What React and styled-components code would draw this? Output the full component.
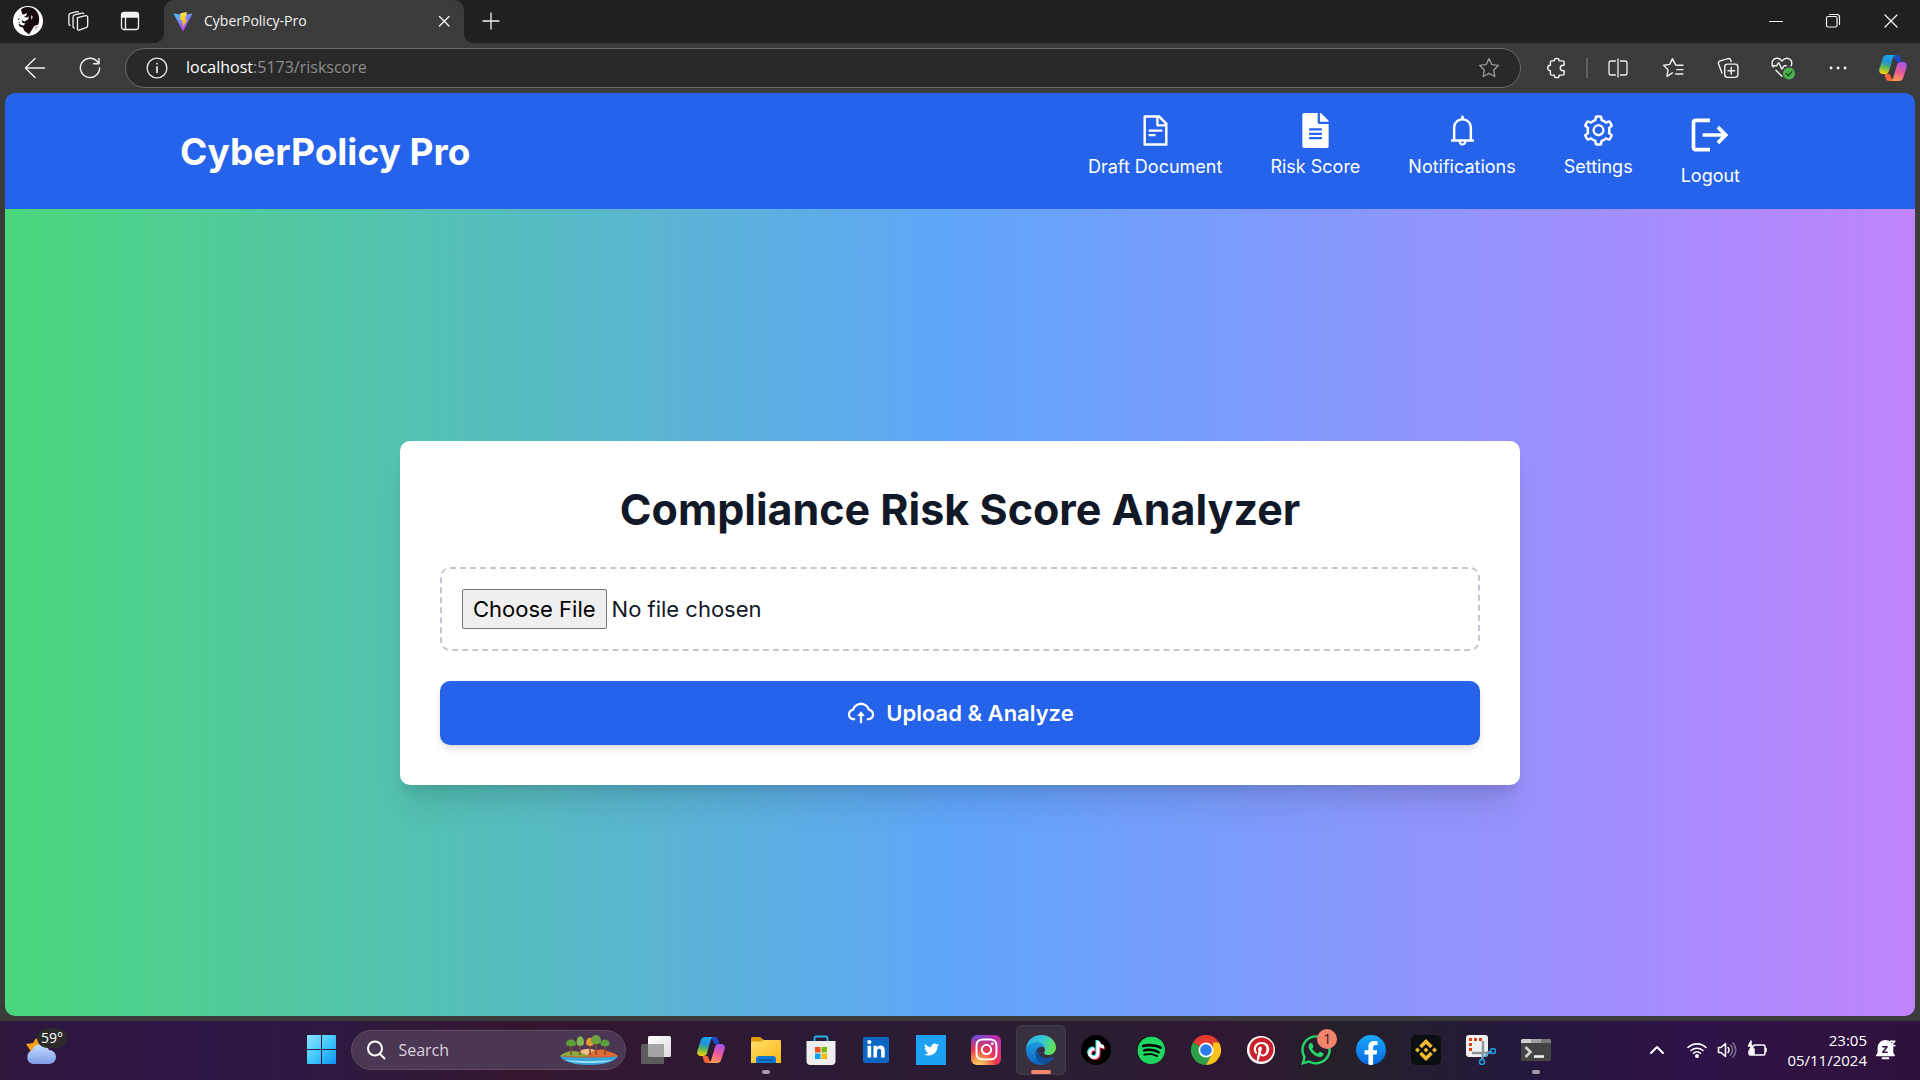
import React from "react";
import styled, { createGlobalStyle } from "styled-components";
import { AiOutlineFileText, AiOutlineBell, AiOutlineSetting, AiOutlineCloudUpload } from "react-icons/ai";
import { FaFileAlt, FaLinkedinIn, FaTwitter, FaInstagram, FaSpotify, FaPinterest, FaWhatsapp, FaFacebookF, FaTiktok } from "react-icons/fa";
import { SiBinance } from "react-icons/si";
import { MdLogout } from "react-icons/md";

const ui = '"Open Sans", "Noto Sans", sans-serif';
const inter = 'Inter, "Liberation Sans", sans-serif';

const GlobalStyle = createGlobalStyle`
  *, *::before, *::after { box-sizing: border-box; }
  body { margin: 0; background: #3b3b3b; font-family: ${ui}; }
  h1, h2, p { margin: 0; }
  button, input { font: inherit; }
  button { border: 0; padding: 0; background: none; color: inherit; cursor: pointer; }
  svg { display: block; flex: none; }
`;

const Desktop = styled.div`
  display: flex;
  flex-direction: column;
  height: 100vh;
  overflow: hidden;
`;

const TabStrip = styled.div`
  display: flex;
  align-items: flex-start;
  height: 43px;
  padding-left: 2px;
  background: #202020;
  color: #f2f2f2;
`;

const StripButton = styled.button`
  display: grid;
  place-items: center;
  width: ${(p) => p.$w || 52}px;
  height: 42px;
`;

const Tab = styled.div`
  display: flex;
  align-items: center;
  gap: 11px;
  width: 300px;
  height: 43px;
  margin-left: 6px;
  padding: 0 10px 2px 9px;
  border-radius: 10px 10px 0 0;
  background: #3b3b3b;
  font-size: 14px;
  position: relative;

  &::before, &::after {
    content: "";
    position: absolute;
    bottom: 0;
    width: 10px;
    height: 10px;
  }
  &::before { left: -10px; background: radial-gradient(circle at 0 0, transparent 10px, #3b3b3b 10px); }
  &::after { right: -10px; background: radial-gradient(circle at 100% 0, transparent 10px, #3b3b3b 10px); }
`;

const TabTitle = styled.span`
  flex: 1;
  white-space: nowrap;
`;

const WindowControls = styled.div`
  display: flex;
  margin-left: auto;
`;

const Toolbar = styled.div`
  display: flex;
  align-items: center;
  height: 50px;
  padding: 0 0 0 7px;
  background: #3b3b3b;
  color: #f0f0f0;
`;

const ToolButton = styled.button`
  display: grid;
  place-items: center;
  width: 55px;
  height: 40px;
`;

const AddressBar = styled.form`
  display: flex;
  flex: 1;
  align-items: center;
  height: 40px;
  margin: 0 8px;
  padding: 0 20px;
  border: 1px solid #6b6b6b;
  border-radius: 20px;
  background: #292929;
`;

const Url = styled.a`
  flex: 1;
  margin-left: 18px;
  padding-bottom: 2px;
  color: #8d8d8d;
  font-size: 16px;
  text-decoration: none;

  b { color: #fff; font-weight: 400; }
`;

const Divider = styled.span`
  width: 2px;
  height: 20px;
  margin: 0 2px;
  background: #606060;
`;

const Viewport = styled.div`
  display: flex;
  flex: 1;
  flex-direction: column;
  min-height: 0;
  margin: 0 5px 5px;
  border-radius: 10px;
  overflow: hidden;
  font-family: ${inter};
`;

const SiteHeader = styled.header`
  background: #2563eb;
  color: #fff;
`;

const HeaderInner = styled.div`
  display: flex;
  align-items: center;
  justify-content: space-between;
  max-width: 1600px;
  margin: 0 auto;
  padding: 20px;
`;

const Brand = styled.h1`
  font-size: 37px;
  font-weight: 700;
  line-height: 45px;
`;

const Nav = styled.nav`
  display: flex;
  align-items: flex-start;
  gap: 48px;
`;

const NavLink = styled.a`
  display: flex;
  flex-direction: column;
  align-items: center;
  gap: 5px;
  color: #fff;
  font-size: 18px;
  line-height: 27px;
  text-decoration: none;
`;

const Main = styled.main`
  display: flex;
  flex: 1;
  align-items: center;
  justify-content: center;
  background: linear-gradient(to right, #4bd77c, #60a5fa, #c084fc);
`;

const Card = styled.form`
  display: flex;
  flex-direction: column;
  gap: 30px;
  width: 100%;
  max-width: 1120px;
  padding: 40px;
  border-radius: 10px;
  background: #fff;
  box-shadow: 0 25px 31px -6px rgba(0, 0, 0, 0.1), 0 10px 12px -6px rgba(0, 0, 0, 0.1);
`;

const CardTitle = styled.h2`
  color: #111827;
  font-size: 43px;
  font-weight: 700;
  line-height: 56px;
  text-align: center;
`;

const FileInput = styled.input`
  display: block;
  width: 100%;
  padding: 20px;
  border: 2px dashed #c3c7cf;
  border-radius: 10px;
  color: #111827;
  font-size: 22px;
  line-height: 36px;

  &::file-selector-button {
    height: 40px;
    margin-right: 5px;
    padding: 0 10px;
    border: 1px solid #767676;
    border-radius: 2px;
    background: #efefef;
    color: #000;
    font: inherit;
  }
`;

const UploadButton = styled.button`
  display: flex;
  align-items: center;
  justify-content: center;
  gap: 10px;
  height: 64px;
  border-radius: 10px;
  background: #2563eb;
  color: #fff;
  font-size: 22px;
  font-weight: 600;
  box-shadow: 0 5px 8px -1px rgba(0, 0, 0, 0.1), 0 2px 5px -2px rgba(0, 0, 0, 0.1);
`;

const Taskbar = styled.footer`
  display: flex;
  align-items: center;
  height: 59px;
  gap: 5px;
  padding-bottom: 2px;
  background: linear-gradient(to right, #2d173b, #2e1647 9%, #2c1a40 17%, #35162f 27%, #2b1a35 42%, #291e31 58%, #301733 63%, #252029 70%, #25183f 80%, #2f1248 88%, #2f123b);
  color: #fff;
`;

const Weather = styled.button`
  display: flex;
  width: 66px;
  margin-right: auto;
  padding-left: 24px;
  position: relative;
`;

const Temperature = styled.span`
  position: absolute;
  left: 37px;
  top: -7px;
  padding: 0 4px;
  border-radius: 10px;
  background: #2b2b2b;
  font-size: 14px;
  line-height: 20px;
`;

const Apps = styled.div`
  display: flex;
  align-items: center;
  gap: 5px;
  margin-right: 66px;
`;

const SearchBox = styled.label`
  display: flex;
  align-items: center;
  gap: 12px;
  width: 275px;
  height: 40px;
  padding: 0 7px 0 14px;
  border: 1px solid #5f4a63;
  border-radius: 20px;
  background: #4b3753;
`;

const SearchInput = styled.input`
  flex: 1;
  min-width: 0;
  padding: 0;
  border: 0;
  outline: 0;
  background: none;
  color: #fff;
  font-size: 16px;

  &::placeholder { color: #d9d3dc; }
`;

const AppButton = styled.button`
  display: grid;
  place-items: center;
  width: 50px;
  height: 50px;
  border-radius: 6px;
  position: relative;
  background: ${(p) => (p.$active ? "#38303f" : "none")};
  box-shadow: ${(p) => (p.$active ? "inset 0 0 0 1px #453c4a" : "none")};

  &::after {
    content: "";
    display: ${(p) => (p.$active || p.$open ? "block" : "none")};
    position: absolute;
    bottom: 1px;
    width: ${(p) => (p.$active ? 20 : 8)}px;
    height: 4px;
    border-radius: 2px;
    background: ${(p) => (p.$active ? "#f4836c" : "#a396aa")};
  }
`;

const Tile = styled.span`
  display: grid;
  place-items: center;
  width: ${(p) => p.$size || 30}px;
  height: ${(p) => p.$size || 30}px;
  border-radius: ${(p) => p.$r || 0};
  background: ${(p) => p.$bg};
  color: ${(p) => p.$fg || "#fff"};
  overflow: hidden;
`;

const TikTokGlyph = styled(FaTiktok)`
  filter: drop-shadow(-1px -1px 0 #25f4ee) drop-shadow(1px 1px 0 #fe2c55);
`;

const FacebookGlyph = styled(FaFacebookF)`
  align-self: end;
`;

const Badge = styled.span`
  position: absolute;
  top: 4px;
  right: 4px;
  width: 20px;
  height: 20px;
  border-radius: 50%;
  background: #f4836c;
  color: #2b1a20;
  font-size: 14px;
  line-height: 20px;
`;

const Tray = styled.div`
  display: flex;
  align-items: center;
  margin-right: 23px;
`;

const TrayButton = styled.button`
  display: grid;
  place-items: center;
  width: ${(p) => p.$w || 30}px;
  height: 40px;
`;

const Clock = styled.time`
  margin: 0 8px 0 15px;
  font-size: 15px;
  line-height: 20px;
  text-align: right;
`;

const Line = ({ s = 20, w = 1.3, children, ...rest }) => (
  <svg width={s} height={s} viewBox="0 0 20 20" fill="none" stroke="currentColor" strokeWidth={w} strokeLinecap="round" strokeLinejoin="round" {...rest}>
    {children}
  </svg>
);

const Avatar = () => (
  <svg width="30" height="30" viewBox="0 0 30 30">
    <circle cx="15" cy="15" r="15" fill="#fff" />
    <path d="M8 3.500C12-.5 20 .5 23.500 5c3 4 3.500 10 1.500 14-1.500 0-3 .5-4 1.500l-5 8-5-4-1-3c-2 0-3.500-1-4.500-3l2-1-2-1 2-2-3-1 3-2-1-2 3 .5z" fill="#170b10" />
    <path d="M8 8l3 .5L14 7l-1 3-2.500 1 3.500.5 2-1-1 3-3.500 2-3-1.500 1 3 3 .5-2 2-3-.500L6 14z" fill="#fff" />
    <path d="M18 9l2 2-2 3zM22.500 19l3 1.500-4 5z" fill="#c9bfc2" />
  </svg>
);

const Vite = () => (
  <svg width="20" height="24" viewBox="0 0 20 24">
    <defs>
      <linearGradient id="va" x1="0" y1="0" x2=".6" y2="1"><stop stopColor="#41d1ff" /><stop offset="1" stopColor="#bd34fe" /></linearGradient>
      <linearGradient id="vb" x1=".4" y1="0" x2=".6" y2="1"><stop stopColor="#ffea83" /><stop offset=".2" stopColor="#ffdd35" /><stop offset="1" stopColor="#ffa800" /></linearGradient>
    </defs>
    <path d="M.5 4.500L10 6l9.500-1.500L10 22.500z" fill="url(#va)" />
    <path d="M14 3L7.500 4.300l-.4 7 2.500-.5-.8 3.600 1.600-.5-1 5 5-8.500-2.500.5z" fill="url(#vb)" />
  </svg>
);

const Copilot = ({ s = 28, id }) => (
  <svg width={s} height={s} viewBox="0 0 28 28">
    <defs>
      <linearGradient id={id + "a"} x1=".5" y1="0" x2=".3" y2="1"><stop stopColor="#1aa7ec" /><stop offset=".35" stopColor="#1f8fd8" /><stop offset=".65" stopColor="#5fba5a" /><stop offset="1" stopColor="#f8d20b" /></linearGradient>
      <linearGradient id={id + "b"} x1=".7" y1="0" x2=".4" y2="1"><stop stopColor="#a555ee" /><stop offset=".5" stopColor="#e8589c" /><stop offset="1" stopColor="#ff9a52" /></linearGradient>
    </defs>
    <path d="M14 1h4c2 0 3 1 3.500 3l1 4h-5z" fill="#1c49c8" />
    <path d="M14 27h-4c-2 0-3-1-3.500-3l-1-4h5z" fill="#f2663c" />
    <path d="M8 1h9c-2 0-3 2-3.500 4L10 17c-.6 2-1.500 3-3.500 3H4c-3 0-4.300-2-3.600-5L3.500 5C4.200 2.500 5.500 1 8 1z" fill={`url(#${id}a)`} />
    <path d="M20 27h-9c2 0 3-2 3.500-4L18 11c.6-2 1.500-3 3.500-3H24c3 0 4.300 2 3.600 5l-3.100 10c-.7 2.500-2 4-4.500 4z" fill={`url(#${id}b)`} />
  </svg>
);

const Cloud = () => (
  <svg width="34" height="30" viewBox="0 0 34 30">
    <defs><linearGradient id="cl" x1="0" y1="0" x2="0" y2="1"><stop stopColor="#c8dcff" /><stop offset="1" stopColor="#7d9fe6" /></linearGradient></defs>
    <path d="M2 9l7-1 3-5 6 6v8l-10 3-2-5z" fill="#f7a11b" />
    <path d="M9 29a7 7 0 01-1-13.500A9 9 0 0125 15a7 7 0 010 14z" fill="url(#cl)" />
  </svg>
);

const Start = () => (
  <svg width="29" height="29" viewBox="0 0 29 29">
    <defs><linearGradient id="st" gradientUnits="userSpaceOnUse" x1="0" y1="0" x2="29" y2="29"><stop stopColor="#8fe3ff" /><stop offset=".5" stopColor="#45c8fb" /><stop offset="1" stopColor="#0a93f5" /></linearGradient></defs>
    <path d="M1 0h13v14H0V1a1 1 0 011-1zM15 0h13a1 1 0 011 1v13H15zM0 15h14v14H1a1 1 0 01-1-1zM15 15h14v13a1 1 0 01-1 1H15z" fill="url(#st)" />
  </svg>
);

const Island = () => (
  <svg width="58" height="30" viewBox="0 0 58 30">
    <path d="M0 21c10-2 48-2 58 0-3 6-15 9-29 9S3 27 0 21z" fill="#36a5dc" />
    <path d="M6 25c12 1.500 34 1.500 46 0-5 4-41 4-46 0z" fill="#a3e2f5" />
    <path d="M20 16c5-3 12-3 16 0l-4 5H20z" fill="#f6c08a" />
    <path d="M26 21c6-6 15-8 21-5 5 1 9 3 11 5-8 1.500-24 1.500-32 0z" fill="#e06a35" />
    <path d="M0 21c5-5 13-6 19-4 4 1 8 3 10 4.500-9 1-22 1-29-.5z" fill="#8aa83f" />
    <path d="M3 21c8 1.500 44 1.500 52 0" stroke="#c9622f" strokeWidth="1.200" fill="none" />
    <path d="M11 20V9M20 20V7M30 20V9M36 20V6M45 20V9" stroke="#8a4b2a" strokeWidth="1.600" />
    <path d="M6 9c0-6 10-6 10 0 1 3-11 3-10 0zM40.500 9c0-6 9-6 9 0 1 3-10 3-9 0z" fill="#5f9e3c" />
    <path d="M16.500 8c0-9 7.500-9 7.500 0 0 4-7.500 4-7.500 0z" fill="#83b552" />
    <path d="M26 8c0-7 8-7 8 0 0 4-8 4-8 0z" fill="#e79a31" />
    <path d="M31 6c0-8 10-8 10 0 1 4-11 4-10 0z" fill="#6da043" />
  </svg>
);

const TaskView = () => (
  <svg width="30" height="28" viewBox="0 0 30 28">
    <defs><linearGradient id="tv" x1="0" y1="0" x2="1" y2="1"><stop stopColor="#fff" /><stop offset="1" stopColor="#dcdcdc" /></linearGradient></defs>
    <rect x="7" y="0" width="23" height="21" rx="1.500" fill="url(#tv)" />
    <rect x="0" y="8" width="23" height="20" rx="1.500" fill="#5c5c5c" />
    <path d="M7 8h16v13H8.500A1.500 1.500 0 017 19.500z" fill="#a5a5a5" />
  </svg>
);

const Explorer = () => (
  <svg width="30" height="26" viewBox="0 0 30 26">
    <defs><linearGradient id="ex" x1="0" y1="0" x2="1" y2="1"><stop stopColor="#ffdf6b" /><stop offset="1" stopColor="#fcb714" /></linearGradient></defs>
    <path d="M0 1.500A1.500 1.500 0 011.500 0H9l4 3h15.500A1.500 1.500 0 0130 4.500V14H0z" fill="#dc9a07" />
    <path d="M0 6c0-1 .5-1.500 1.500-1.500H10L13 3h15.500c1 0 1.500.5 1.500 1.500V26H0z" fill="url(#ex)" />
    <path d="M5 26v-4c0-2 1-3 3-3h14c2 0 3 1 3 3v4z" fill="#0f78d0" />
    <path d="M8 23h14" stroke="#0b4d94" strokeWidth="1.200" />
  </svg>
);

const Store = () => (
  <svg width="30" height="30" viewBox="0 0 30 30">
    <path d="M8.500 6V3a1.500 1.500 0 011.500-1.500h10A1.500 1.500 0 0121.500 3v3" fill="none" stroke="#29b2ea" strokeWidth="1.800" />
    <path d="M.5 6h29v20a4 4 0 01-4 4h-21a4 4 0 01-4-4z" fill="#eeeeee" />
    <path d="M9 12h5.500v5.500H9z" fill="#f25022" /><path d="M15.500 12H21v5.500h-5.500z" fill="#7fba00" />
    <path d="M9 18.500h5.500V24H9z" fill="#00a4ef" /><path d="M15.500 18.500H21V24h-5.500z" fill="#ffb900" />
  </svg>
);

const Edge = () => (
  <svg width="30" height="30" viewBox="0 0 30 30">
    <defs>
      <linearGradient id="ea" x1="0" y1=".3" x2="1" y2=".6"><stop stopColor="#2fb2e8" /><stop offset=".5" stopColor="#35c8d0" /><stop offset="1" stopColor="#66e34e" /></linearGradient>
      <linearGradient id="eb" x1="0" y1="0" x2="0" y2="1"><stop stopColor="#1f9de0" /><stop offset="1" stopColor="#0b63c2" /></linearGradient>
    </defs>
    <path d="M0 14C1 5 7 0 15 0c9 0 15 6 15 12.500 0 5-4 7.500-7.500 7.500-3 0-4.500-1-4.500-2 0-.8 1-1.300 1-3.500 0-3-3.500-6-8-6-6 0-9 3-11 5.500z" fill="url(#ea)" />
    <path d="M0 14c1-4 5-7 10.500-7 5 0 8.500 3.500 8.500 7-1-2-4-3-6-1.500-5 3-4 12 2 15.500l3 1.600C7.500 31.500 0 24 0 14z" fill="url(#eb)" />
    <path d="M11 13.500c-4 6 0 13 7 16 4-.8 8-3.500 10-7 .3-.6-.2-1-.8-.7-7 3.500-15.200.2-15.200-6.300z" fill="#124f9d" />
  </svg>
);

const Chrome = () => (
  <svg width="30" height="30" viewBox="0 0 30 30">
    <path d="M15 15L2 7.500A15 15 0 0128 7.500z" fill="#e33b2e" />
    <path d="M2 7.500A15 15 0 0015 30l6.500-11.300L15 15z" fill="#2c9f48" />
    <path d="M28 7.500A15 15 0 0115 30l7-13V7.500z" fill="#fcc31e" />
    <circle cx="15" cy="15" r="7.500" fill="#fff" /><circle cx="15" cy="15" r="5.800" fill="#2a7de9" />
  </svg>
);

const Snip = () => (
  <svg width="30" height="30" viewBox="0 0 30 30">
    <rect width="22" height="22" rx="3" fill="#f1f1f1" />
    <path d="M4.500 16V4.500H16" fill="none" stroke="#dc3d17" strokeWidth="3" strokeDasharray="3 2" />
    <path d="M17 6v11l-1 8M6 18h12l8-1" fill="none" stroke="#8b959d" strokeWidth="2.400" />
    <circle cx="27" cy="16" r="2.500" fill="none" stroke="#1f9be6" strokeWidth="1.600" /><circle cx="16" cy="27" r="2.500" fill="none" stroke="#1f9be6" strokeWidth="1.600" />
    <path d="M18 22l6-5" stroke="#1f9be6" strokeWidth="1.600" />
  </svg>
);

const Terminal = () => (
  <svg width="30" height="22" viewBox="0 0 30 22">
    <rect width="30" height="22" rx="1.500" fill="#444" />
    <path d="M0 4V1.500A1.500 1.500 0 011.500 0H10v4z" fill="#d0d0d0" /><path d="M10 0h10v4H10z" fill="#a0a0a0" /><path d="M20 0h8.500A1.500 1.500 0 0130 1.500V4H20z" fill="#787878" />
    <path d="M4.500 8l5 5-5 5" fill="none" stroke="#d0d0d0" strokeWidth="2.600" /><path d="M13 17.500h10" stroke="#efefef" strokeWidth="2.600" />
  </svg>
);

const navItems = [
  { label: "Draft Document", icon: <AiOutlineFileText size={35} /> },
  { label: "Risk Score", icon: <FaFileAlt size={35} /> },
  { label: "Notifications", icon: <AiOutlineBell size={35} /> },
  { label: "Settings", icon: <AiOutlineSetting size={35} /> },
  { label: "Logout", icon: <MdLogout size={44} /> },
];

const apps = [
  { name: "Task view", icon: <TaskView /> },
  { name: "Copilot", icon: <Copilot id="task" /> },
  { name: "File Explorer", icon: <Explorer />, open: true },
  { name: "Store", icon: <Store /> },
  { name: "LinkedIn", icon: <Tile $size={26} $r="2px" $bg="#0a66c2"><FaLinkedinIn size={20} /></Tile> },
  { name: "Twitter", icon: <Tile $bg="#1da1f2"><FaTwitter size={15} /></Tile> },
  { name: "Instagram", icon: <Tile $r="6px" $bg="radial-gradient(circle at 25% 105%, #fed373 0, #f9a04b 20%, #e8394f 45%, transparent 75%), linear-gradient(135deg, #5a55d8, #b82ea8 45%, #d62d85)"><FaInstagram size={25} /></Tile> },
  { name: "Edge", icon: <Edge />, active: true },
  { name: "TikTok", icon: <Tile $r="50%" $bg="#000"><TikTokGlyph size={18} /></Tile> },
  { name: "Spotify", icon: <Tile $size={28} $r="50%" $bg="#000" $fg="#1ed760"><FaSpotify size={29} /></Tile> },
  { name: "Chrome", icon: <Chrome /> },
  { name: "Pinterest", icon: <Tile $size={28} $r="50%" $bg="#fff" $fg="#c8232c"><FaPinterest size={25} /></Tile> },
  { name: "WhatsApp", icon: <FaWhatsapp size={34} color="#25d366" />, badge: 1 },
  { name: "Facebook", icon: <Tile $r="50%" $bg="linear-gradient(#19a9fb, #0667e0)"><FacebookGlyph size={24} /></Tile> },
  { name: "Binance", icon: <Tile $r="5px" $bg="#0b0e11" $fg="#f3ba2f"><SiBinance size={22} /></Tile> },
  { name: "Snipping Tool", icon: <Snip /> },
  { name: "Terminal", icon: <Terminal />, open: true },
];

export default function App() {
  return (
    <Desktop>
      <GlobalStyle />
      <TabStrip>
        <StripButton aria-label="Profile"><Avatar /></StripButton>
        <StripButton aria-label="Workspaces" $w={48}>
          <Line s={22} w={1.200}><path d="M9.500 7l7.500-1.800c1-.2 1.800.3 1.800 1.300v7.500c0 1-.5 1.700-1.400 2L11 18.300c-1 .2-1.500-.3-1.500-1.200zM6.500 16.500c-.8-.2-1-.6-1-1.400V6.500c0-1 .5-1.700 1.400-2l6.800-1.700c.7-.1 1.100 0 1.500.4M2.700 14c-.8-.2-1-.6-1-1.400V5c0-1 .5-1.700 1.400-2l5.800-1.500c.7-.1 1.100 0 1.500.4" /></Line>
        </StripButton>
        <StripButton aria-label="Tab actions" $w={56}>
          <Line><rect x="1.500" y="1.500" width="17" height="17" rx="2.500" /><path d="M2 2.500h16v3.500H2z" fill="currentColor" /><path d="M5.500 6v12" /></Line>
        </StripButton>
        <Tab>
          <Vite />
          <TabTitle>CyberPolicy-Pro</TabTitle>
          <button aria-label="Close tab"><Line w={1.400}><path d="M5.500 5.500l9.500 9.500M15 5.500l-9.500 9.500" /></Line></button>
        </Tab>
        <StripButton aria-label="New tab" $w={54}><Line><path d="M10 2v16M2 10h16" /></Line></StripButton>
        <WindowControls>
          <StripButton aria-label="Minimize" $w={57}><Line w={1}><path d="M3.500 10.500h13" /></Line></StripButton>
          <StripButton aria-label="Restore" $w={58}><Line w={1.200}><rect x="3.500" y="5.500" width="10.500" height="10.500" rx="1.500" /><path d="M6.500 3.500h7.500a2.500 2.500 0 012.500 2.500v7.500" /></Line></StripButton>
          <StripButton aria-label="Close" $w={58}><Line><path d="M4 4l12 12M16 4L4 16" /></Line></StripButton>
        </WindowControls>
      </TabStrip>
      <Toolbar>
        <ToolButton aria-label="Back"><Line s={24} w={1.200}><path d="M18 10H2M10 2L2 10l8 8" /></Line></ToolButton>
        <ToolButton aria-label="Refresh"><Line s={24} w={1.200}><path d="M17 6A8 8 0 1018 10M17.500 2v4.500H13" /></Line></ToolButton>
        <AddressBar>
          <Line s={22} color="#eee" w={1.200}><circle cx="10" cy="10" r="9" /><path d="M10 9v5M10 6v.2" strokeWidth="1.500" /></Line>
          <Url href="#"><b>localhost</b>:5173/riskscore</Url>
          <Line s={22} color="#999" w={1.200}><path d="M10 1.500l2.600 5.400 5.900.8-4.300 4.100 1.100 5.900L10 14.900l-5.300 2.800 1.100-5.900L1.500 7.700l5.900-.8z" /></Line>
        </AddressBar>
        <ToolButton aria-label="Extensions"><Line s={22}><path d="M5 3.500h2.500a2.200 2.200 0 014.500 0h3.500a1 1 0 011 1V7.500h-1a2.500 2.500 0 000 5h1v3a1 1 0 01-1 1H12a2.200 2.200 0 01-4.500 0H5a1 1 0 01-1-1V12.500a2.200 2.200 0 010-5v-3a1 1 0 011-1z" /></Line></ToolButton>
        <Divider />
        <ToolButton aria-label="Split screen"><Line><path d="M7.500 3H3a2 2 0 00-2 2v10a2 2 0 002 2h4.500M12.500 3H17a2 2 0 012 2v10a2 2 0 01-2 2h-4.500M10 1v18" /></Line></ToolButton>
        <ToolButton aria-label="Favorites"><Line s={22}><path d="M12.500 7.500h6.500M13.500 11.500h5.500M12.500 15.500h6.500M9.500 14.500l-5 3.200 1-6L1.500 7.500l5.500-.8L9.500 1.500l2.500 5" /></Line></ToolButton>
        <ToolButton aria-label="Collections"><Line s={22}><rect x="7" y="6.500" width="12" height="12" rx="2.500" /><path d="M13 9.500v6M10 12.500h6M4.500 14.500L1.300 6c-.3-1 0-1.800 1-2.300L10 1.500c1-.3 2 0 2.300 1l.5 1.500" /></Line></ToolButton>
        <ToolButton aria-label="Browser essentials">
          <Line s={24} viewBox="0 0 22 22"><path d="M2 10C-.5 6 2 2 5.500 2 8 2 9.500 4 10 4.500 10.500 4 12 2 14.500 2 18 2 20 5 18.500 9M4.500 13l5.500 5.500M1 9h4l2-3 3 6 2-3h2" /><circle cx="16.500" cy="16" r="5.500" fill="#4caf50" stroke="none" /><path d="M14 16l2 2 3-3.500" stroke="#15501a" /></Line>
        </ToolButton>
        <ToolButton aria-label="More"><Line><path d="M3 10h.1M10 10h.1M17 10h.1" strokeWidth="2.800" /></Line></ToolButton>
        <ToolButton aria-label="Copilot"><Copilot id="bar" /></ToolButton>
      </Toolbar>

      <Viewport>
        <SiteHeader>
          <HeaderInner>
            <Brand>CyberPolicy Pro</Brand>
            <Nav>
              {navItems.map((n) => (
                <NavLink href="#" key={n.label}>{n.icon}<span>{n.label}</span></NavLink>
              ))}
            </Nav>
          </HeaderInner>
        </SiteHeader>
        <Main>
          <Card onSubmit={(e) => e.preventDefault()}>
            <CardTitle>Compliance Risk Score Analyzer</CardTitle>
            <FileInput type="file" aria-label="Document" />
            <UploadButton type="submit"><AiOutlineCloudUpload size={30} />Upload &amp; Analyze</UploadButton>
          </Card>
        </Main>
      </Viewport>

      <Taskbar>
        <Weather aria-label="Weather"><Cloud /><Temperature>59°</Temperature></Weather>
        <Apps>
          <AppButton aria-label="Start"><Start /></AppButton>
          <SearchBox>
            <Line s={20} w={2}><circle cx="9" cy="8.500" r="7" /><path d="M14 14l4.500 4.500" /></Line>
            <SearchInput aria-label="Search" placeholder="Search" />
            <Island />
          </SearchBox>
          {apps.map((a) => (
            <AppButton key={a.name} aria-label={a.name} $active={a.active} $open={a.open}>
              {a.icon}
              {a.badge && <Badge>{a.badge}</Badge>}
            </AppButton>
          ))}
        </Apps>
        <Tray>
          <TrayButton aria-label="Hidden icons" $w={50}><Line w={2}><path d="M4 13l6-6 6 6" /></Line></TrayButton>
          <TrayButton aria-label="Network"><Line w={1.600}><path d="M1 7.500a13 13 0 0118 0M4 10.500a9 9 0 0112 0M6.500 13.300a5 5 0 017 0" /><circle cx="10" cy="16" r="1.200" fill="currentColor" /></Line></TrayButton>
          <TrayButton aria-label="Volume"><Line w={1.500}><path d="M1.500 7.500H4L8.500 3.500v13L4 12.500H1.500zM11 7.500a3.500 3.500 0 010 5" /><path d="M13.500 5a7 7 0 010 10M16 3a10 10 0 010 14" opacity=".4" /></Line></TrayButton>
          <TrayButton aria-label="Battery"><Line w={1.500}><path d="M7 5h9.500a1.500 1.500 0 011.500 1.500v7a1.500 1.500 0 01-1.500 1.500H3.500A1.500 1.500 0 012 13.500V11M19 8.500v3" /><path d="M3 9h4v5H3zM4 1L1.500 6h5L4 10z" fill="currentColor" /></Line></TrayButton>
          <Clock dateTime="2024-11-05T23:05">23:05<br />05/11/2024</Clock>
          <Line s={22} color="#fff"><path d="M3 13V8a6.500 6.500 0 0113 0v5l1.500 2h-16z" fill="currentColor" /><path d="M7 17.500h5" strokeWidth="2" /><path d="M7 7h4l-4 5h4" stroke="#2f123b" /><path d="M14 2h4l-4 4h4" strokeWidth="1.500" /></Line>
        </Tray>
      </Taskbar>
    </Desktop>
  );
}
